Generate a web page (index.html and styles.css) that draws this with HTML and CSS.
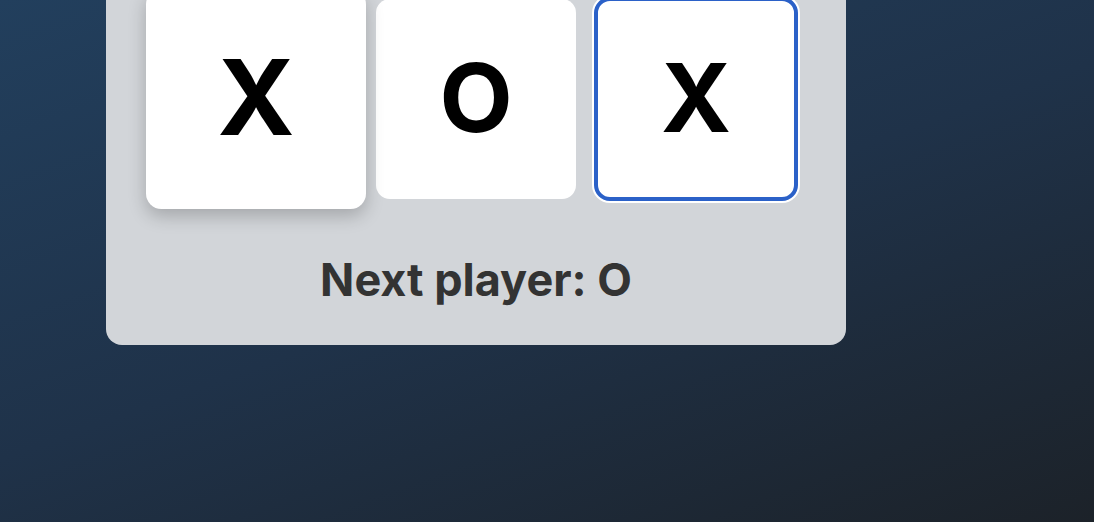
FILE: index.html
```html
<!DOCTYPE html>
<html lang="en">
<head>
<meta charset="utf-8">
<title>Tic-Tac-Toe</title>
<link rel="stylesheet" href="styles.css">
</head>
<body>
<main class="page">
  <section class="panel">
    <div class="board">
      <button class="cell"></button>
      <button class="cell"></button>
      <button class="cell"></button>
      <button class="cell"></button>
      <button class="cell"></button>
      <button class="cell"></button>
      <button class="cell cell-hover">X</button>
      <button class="cell">O</button>
      <button class="cell cell-focus">X</button>
    </div>
    <p class="status">Next player: O</p>
  </section>
</main>
</body>
</html>
```

FILE: styles.css
```css
html, body {
  margin: 0;
  padding: 0;
  height: 100%;
}

body {
  overflow: hidden;
  background: linear-gradient(160deg, #223f5d 0%, #1f3249 50%, #1c2229 100%);
  font-family: "Inter", "Liberation Sans", sans-serif;
}

.page {
  padding-left: 106px;
}

.panel {
  width: 640px;
  margin-top: -491px;
  padding: 50px 50px 38px;
  background: #d2d5d9;
  border-radius: 16px;
}

.board {
  display: grid;
  grid-template-columns: repeat(3, 200px);
  grid-template-rows: repeat(3, 200px);
  gap: 20px;
}

.cell {
  display: flex;
  align-items: center;
  justify-content: center;
  width: 200px;
  height: 200px;
  padding: 0 0 3px;
  border: none;
  border-radius: 14px;
  background: #ffffff;
  color: #000000;
  font-family: "Inter", "Liberation Sans", sans-serif;
  font-weight: 700;
  font-size: 95px;
  line-height: 1;
  cursor: pointer;
}

.cell-hover {
  transform: scale(1.1);
  box-shadow: 0 6px 16px rgba(0, 0, 0, 0.22);
  position: relative;
  z-index: 1;
}

.cell-focus {
  outline: 3px solid #2b61c8;
  outline-offset: -1px;
  box-shadow: inset 0 0 0 2px #2b61c8, 0 0 0 4px #ffffff;
}

.status {
  margin: 54px 0 0;
  text-align: center;
  font-size: 45px;
  line-height: 54px;
  font-weight: 700;
  color: #333333;
}
```
